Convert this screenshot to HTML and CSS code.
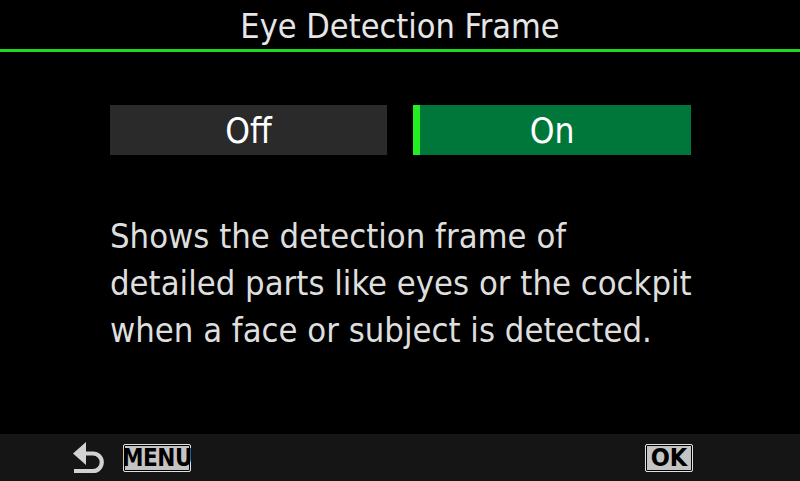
FILE: index.html
```html
<!DOCTYPE html>
<html>
<head>
<meta charset="utf-8">
<link rel="stylesheet" href="styles.css">
</head>
<body>
<div class="screen">
  <header class="title-bar">
    <h1 class="title">Eye Detection Frame</h1>
  </header>
  <main class="content">
    <div class="options">
      <div class="option">Off</div>
      <div class="option option-selected">On</div>
    </div>
    <p class="description">Shows the detection frame of<br>detailed parts like eyes or the cockpit<br>when a face or subject is detected.</p>
  </main>
  <footer class="footer">
    <div class="footer-left">
      <svg class="back-icon" width="36" height="34" viewBox="0 0 36 34">
        <polygon points="2,12.5 15,1 15,24" fill="#d2d2d2"/>
        <path d="M13 12.5 H22 A8.75 8.75 0 0 1 22 30 H3" fill="none" stroke="#d2d2d2" stroke-width="4.2"/>
      </svg>
      <span class="key key-menu">MENU</span>
    </div>
    <span class="key key-ok">OK</span>
  </footer>
</div>
</body>
</html>
```
FILE: styles.css
```css
html, body {
  margin: 0;
  padding: 0;
  background: #000;
}
.screen {
  width: 800px;
  height: 481px;
  display: flex;
  flex-direction: column;
  background: #000;
  font-family: "DejaVu Sans Condensed", "DejaVu Sans", sans-serif;
  overflow: hidden;
}
.title-bar {
  height: 49px;
  border-bottom: 3px solid #1fd81f;
  display: flex;
  align-items: center;
  justify-content: center;
  flex: none;
}
.title {
  margin: 0;
  padding-top: 4px;
  font-weight: normal;
  font-size: 34px;
  color: #e6e6e6;
  line-height: 45px;
}
.content {
  flex: 1;
  padding: 53px 0 0 110px;
}
.options {
  display: flex;
  gap: 26px;
}
.option {
  width: 277px;
  height: 50px;
  background: #2a2a2a;
  color: #fff;
  font-size: 35px;
  display: flex;
  align-items: center;
  justify-content: center;
  box-sizing: border-box;
  padding-top: 2px;
}
.option-selected {
  width: 278px;
  background: #00773a;
  border-left: 7px solid #22f022;
  padding-right: 7px;
}
.description {
  margin: 58px 0 0 0;
  color: #dedede;
  font-size: 34.3px;
  line-height: 47px;
}
.footer {
  height: 47px;
  flex: none;
  background: #151515;
  display: flex;
  align-items: center;
  justify-content: space-between;
  padding: 0 107px 0 71px;
}
.footer-left {
  display: flex;
  align-items: center;
  gap: 16px;
}
.back-icon {
  display: block;
}
.key {
  display: flex;
  align-items: center;
  justify-content: center;
  height: 28px;
  box-sizing: border-box;
  background: #c4c4c4;
  border: 1.5px solid #e0e0e0;
  outline: 1px solid #000;
  outline-offset: -2.5px;
  color: #000;
  font-family: "Liberation Sans Narrow", "DejaVu Sans Condensed", sans-serif;
  font-weight: bold;
  font-size: 24px;
  line-height: 1;
  border-radius: 2px;
}
.key-menu {
  width: 68px;
  letter-spacing: -0.5px;
}
.key-ok {
  width: 48px;
  font-size: 25px;
}
```
